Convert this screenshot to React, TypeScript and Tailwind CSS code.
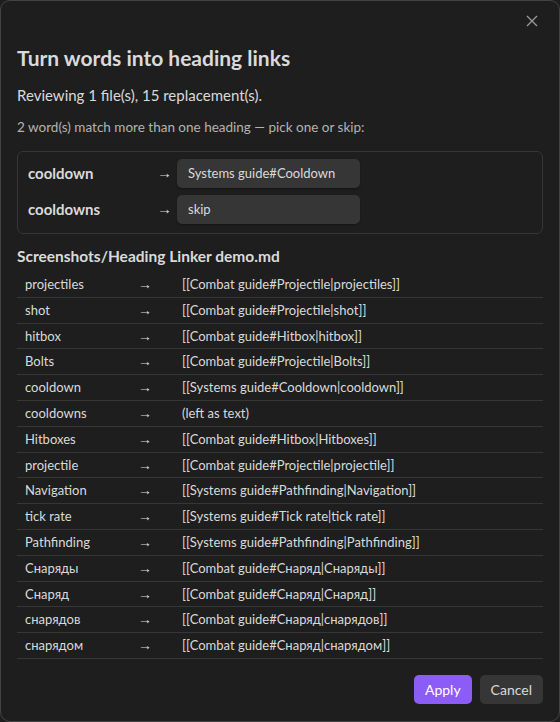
import React from "react";

const rows: [string, string][] = [
  ["projectiles", "[[Combat guide#Projectile|projectiles]]"],
  ["shot", "[[Combat guide#Projectile|shot]]"],
  ["hitbox", "[[Combat guide#Hitbox|hitbox]]"],
  ["Bolts", "[[Combat guide#Projectile|Bolts]]"],
  ["cooldown", "[[Systems guide#Cooldown|cooldown]]"],
  ["cooldowns", "(left as text)"],
  ["Hitboxes", "[[Combat guide#Hitbox|Hitboxes]]"],
  ["projectile", "[[Combat guide#Projectile|projectile]]"],
  ["Navigation", "[[Systems guide#Pathfinding|Navigation]]"],
  ["tick rate", "[[Systems guide#Tick rate|tick rate]]"],
  ["Pathfinding", "[[Systems guide#Pathfinding|Pathfinding]]"],
  ["Снаряды", "[[Combat guide#Снаряд|Снаряды]]"],
  ["Снаряд", "[[Combat guide#Снаряд|Снаряд]]"],
  ["снарядов", "[[Combat guide#Снаряд|снарядов]]"],
  ["снарядом", "[[Combat guide#Снаряд|снарядом]]"],
];

const choices: [string, string][] = [
  ["cooldown", "Systems guide#Cooldown"],
  ["cooldowns", "skip"],
];

const arrowFont = { fontFamily: '"Liberation Sans", sans-serif' };

export default function App() {
  return (
    <div
      className="w-[560px] h-[722px] bg-[#1e1e1e] text-[#dadada]"
      style={{ fontFamily: 'Lato, "Noto Sans", sans-serif' }}
    >
      <div className="relative h-full border border-[#434343] rounded-[10px] px-4 pt-[44px]">
        <button className="absolute right-[21px] top-[14px] text-[#9a9a9a]">
          <svg width="12" height="12" viewBox="0 0 12 12" fill="none" stroke="currentColor" strokeWidth="1.3">
            <path d="M1 1L11 11M11 1L1 11" />
          </svg>
        </button>

        <h1 className="text-[21px] font-bold leading-[26px] text-[#dadada]">Turn words into heading links</h1>

        <p className="mt-[14px] text-[15px] leading-[20px]">Reviewing 1 file(s), 15 replacement(s).</p>

        <p className="mt-[13px] text-[13.5px] leading-[18px] text-[#b3b3b3]">
          2 word(s) match more than one heading — pick one or skip:
        </p>

        <div className="mt-[15px] border border-[#363636] rounded-[6px] px-[10px] pt-[7px] pb-[9px] flex flex-col gap-[7px]">
          {choices.map(([word, value]) => (
            <div key={word} className="flex items-center h-[29px]">
              <span className="w-[129px] text-[15px] font-bold">{word}</span>
              <span className="w-[20px] text-[15px]" style={arrowFont}>→</span>
              <div className="w-[183px] h-[29px] rounded-[5px] bg-[#363636] shadow-[0_1px_2px_rgba(0,0,0,0.35)] flex items-center pl-[11px] text-[13px]">
                {value}
              </div>
            </div>
          ))}
        </div>

        <h2 className="mt-[12px] text-[15.5px] font-bold leading-[20px]">Screenshots/Heading Linker demo.md</h2>

        <div className="mt-[6px]">
          {rows.map(([word, link]) => (
            <div
              key={word}
              className="grid grid-cols-[113px_44px_1fr] border-b border-[#363636] text-[13px] leading-[16.8px] py-[4px]"
            >
              <span className="px-2">{word}</span>
              <span className="px-2 text-[14px] leading-[16.8px]" style={arrowFont}>→</span>
              <span className="px-2">{link}</span>
            </div>
          ))}
        </div>

        <div className="mt-[16px] flex justify-end gap-[8px]">
          <button className="h-[29px] px-[11px] rounded-[5px] bg-[#8b5cf6] text-white text-[14px]">Apply</button>
          <button className="h-[29px] px-[11px] rounded-[5px] bg-[#363636] text-[#dadada] text-[14px]">Cancel</button>
        </div>
      </div>
    </div>
  );
}
